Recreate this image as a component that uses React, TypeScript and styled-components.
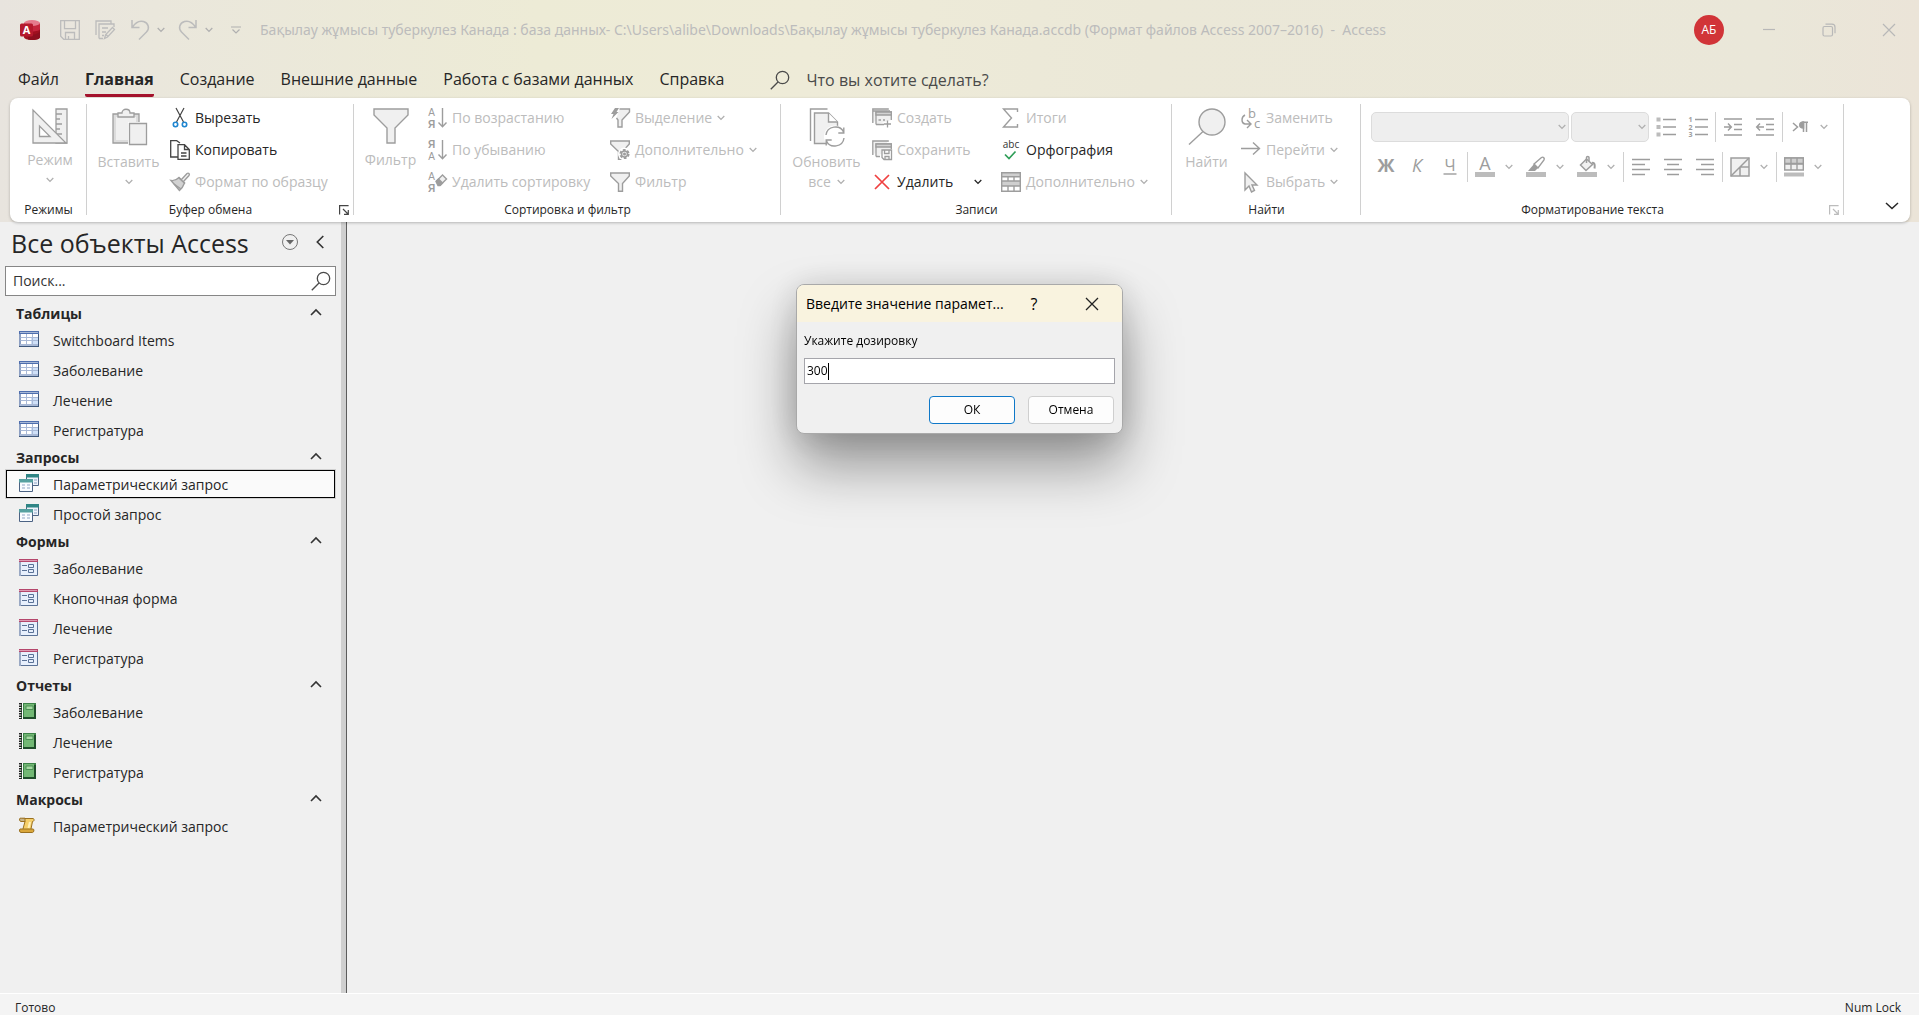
import React from 'react';
import styled, { createGlobalStyle } from 'styled-components';

const GlobalStyle = createGlobalStyle`
  * { box-sizing: border-box; }
  html, body, #root { height: 100%; }
  body {
    margin: 0;
    overflow: hidden;
    font-family: 'Open Sans', 'Noto Sans', sans-serif;
    font-size: 14px;
    line-height: 20px;
    color: #262626;
    background: #f0f0f0;
  }
  button, input, select { font: inherit; color: inherit; margin: 0; }
  button { border: 0; padding: 0; background: none; }
  svg { display: block; flex: none; overflow: visible; }
`;

const G = '#9d9d9d';
const F = '#f0f0f0';

/* ---------- layout ---------- */

const Page = styled.div`
  display: flex;
  flex-direction: column;
  height: 100%;
`;

const Chrome = styled.header`
  background: linear-gradient(90deg, #e8e4de 0%, #eae7dc 8%, #edebd6 28%, #eeebd8 42%, #ebe8d8 60%, #eae7d9 92%, #ebe4d8 100%);
`;

const TitleBar = styled.div`
  display: flex;
  align-items: center;
  height: 60px;
  padding-left: 20px;
  color: #bcbcbc;

  > svg { margin-right: 12px; }
`;

const QuickButton = styled.button`
  display: flex;
  justify-content: center;
  align-items: center;
  width: 35px;
  height: 32px;
`;

const QuickDrop = styled(QuickButton)`
  width: 8px;
  margin-right: 5px;
`;

const WindowTitle = styled.div`
  flex: 1;
  padding-left: 7px;
  font-family: 'Noto Sans', 'Open Sans', sans-serif;
  white-space: pre;
  overflow: hidden;
`;

const Avatar = styled.button`
  width: 30px;
  height: 30px;
  margin-right: 15px;
  border-radius: 50%;
  background: #d13438;
  color: #fff;
  font-size: 12px;
`;

const WindowButton = styled.button`
  display: flex;
  align-items: center;
  justify-content: center;
  width: 60px;
  height: 60px;
`;

const TabBar = styled.nav`
  display: flex;
  align-items: center;
  gap: 26px;
  height: 38px;
  padding: 2px 18px 0;
  font-size: 16px;
`;

const Tab = styled.button<{ $active?: boolean }>`
  height: 33px;
  border-bottom: 3px solid ${p => (p.$active ? '#a4122c' : 'transparent')};
  border-radius: 2px;
  font-weight: ${p => (p.$active ? 700 : 400)};
  white-space: nowrap;
`;

const TellMe = styled.label`
  display: flex;
  align-items: center;
  gap: 16px;
  flex: 1;
  padding-left: 20px;

  input {
    flex: 1;
    border: 0;
    padding: 0;
    background: none;
    outline: 0;
  }
  input::placeholder { color: #4a4a4a; opacity: 1; }
`;

const Ribbon = styled.div`
  position: relative;
  display: flex;
  height: 124px;
  margin: 0 9px 0 10px;
  background: #fff;
  border-radius: 8px;
  box-shadow: 0 1px 3px rgba(0, 0, 0, 0.25);
`;

const Group = styled.section<{ $w: number }>`
  display: flex;
  flex-direction: column;
  flex: none;
  width: ${p => p.$w}px;
  background: linear-gradient(#d0d0d0, #d0d0d0) right 6px / 1px 111px no-repeat;
`;

const GroupBody = styled.div`
  display: flex;
  height: 100px;
  padding-top: 4px;
`;

const GroupFooter = styled.div`
  display: flex;
  align-items: center;
  height: 24px;

  h2 {
    flex: 1;
    margin: 0;
    font-size: 12px;
    font-weight: 400;
    text-align: center;
    white-space: nowrap;
  }
  button {
    display: flex;
    justify-content: center;
    width: 20px;
  }
`;

const BigButton = styled.button<{ $w: number }>`
  display: flex;
  flex-direction: column;
  align-items: center;
  flex: none;
  width: ${p => p.$w}px;
  padding-top: 6px;
  color: #bcbcbc;

  > svg:first-child { margin-bottom: 6px; }
`;

const BigLine = styled.span`
  display: flex;
  align-items: center;
  gap: 6px;
  height: 20px;
`;

const Stack = styled.div<{ $w: number }>`
  display: flex;
  flex-direction: column;
  flex: none;
  width: ${p => p.$w}px;
`;

const SmallButton = styled.button<{ $off?: boolean; $wide?: boolean }>`
  display: flex;
  align-items: center;
  gap: 5px;
  height: 32px;
  white-space: nowrap;
  color: ${p => (p.$off ? '#bcbcbc' : '#262626')};

  > svg:last-child:not(:first-child) { margin-left: ${p => (p.$wide ? 16 : 0)}px; }
`;

const FormatArea = styled.div`
  display: flex;
  flex-direction: column;
  gap: 10px;
  padding: 10px 0 0 9px;
`;

const FormatRow = styled.div`
  display: flex;
  align-items: center;
  height: 30px;
`;

const Tool = styled.button`
  display: flex;
  align-items: center;
  justify-content: center;
  width: 32px;
  height: 30px;
`;

const Drop = styled.button`
  display: flex;
  align-items: center;
  justify-content: center;
  width: 16px;
  height: 30px;
  margin-right: 3px;
`;

const Rule = styled.span`
  width: 1px;
  height: 30px;
  margin: 0 1px;
  background: #d0d0d0;
`;

const Combo = styled.span<{ $w: number }>`
  display: grid;
  align-items: center;
  width: ${p => p.$w}px;
  margin: 0 1px;

  select {
    grid-area: 1 / 1;
    width: 100%;
    height: 30px;
    border: 1px solid #dcdcdc;
    border-radius: 5px;
    background: #eeeeee;
    appearance: none;
    opacity: 1;
  }
  svg { grid-area: 1 / 1; justify-self: end; margin-right: 3px; }
`;

const CollapseCell = styled.div`
  display: flex;
  flex: 1;
  justify-content: flex-end;
  align-items: flex-end;
  padding: 0 11px 9px;
`;

const Workspace = styled.div`
  display: flex;
  flex: 1;
  min-height: 0;
`;

const Sidebar = styled.aside`
  width: 347px;
  flex: none;
  padding: 0 5px;
  border-right: 1px solid #5c5c5c;
  background: linear-gradient(#cfcfcf, #cfcfcf) right / 5px 100% no-repeat, #f0f0f0;
`;

const SideHeader = styled.div`
  display: flex;
  align-items: center;
  height: 44px;
  padding: 0 6px 3px 6px;

  h1 {
    flex: 1;
    margin: 0;
    font-size: 25px;
    line-height: 36px;
    font-weight: 400;
    white-space: nowrap;
  }
`;

const HeaderButton = styled.button`
  display: flex;
  justify-content: center;
  width: 30px;
  padding-bottom: 2px;
`;

const SearchField = styled.label`
  display: flex;
  align-items: center;
  width: 331px;
  height: 30px;
  margin-bottom: 5px;
  padding: 0 4px 0 7px;
  border: 1px solid #868686;
  background: #fff;

  input {
    flex: 1;
    min-width: 0;
    border: 0;
    padding: 0;
    outline: 0;
    background: none;
  }
  input::placeholder { color: #333; opacity: 1; }
`;

const SectionButton = styled.button`
  display: flex;
  align-items: center;
  justify-content: space-between;
  width: 331px;
  height: 24px;
  padding: 1px 14px 0 11px;
  font-weight: 700;

  svg { margin-bottom: 2px; }
`;

const ObjectList = styled.ul`
  margin: 0;
  padding: 0;
  list-style: none;

  li { padding: 1px; }
`;

const ObjectButton = styled.button<{ $selected?: boolean }>`
  display: flex;
  align-items: center;
  gap: 14px;
  width: 329px;
  height: 28px;
  padding: 2px 0 0 12px;
  border: 1px solid ${p => (p.$selected ? '#000' : 'transparent')};
  background: ${p => (p.$selected ? '#fafafa' : 'none')};
  box-shadow: ${p => (p.$selected ? '0 0 0 1px #d0d0d0' : 'none')};
`;

const Canvas = styled.main`
  flex: 1;
`;

const StatusBar = styled.footer`
  display: flex;
  justify-content: space-between;
  align-items: center;
  height: 22px;
  padding: 6px 18px 0 15px;
  border-top: 1px solid #fff;
  background: #f4f4f4;
  font-size: 12px;
`;

const Overlay = styled.div`
  position: fixed;
  inset: 0;
  display: flex;
  justify-content: center;
  align-items: flex-start;
  padding-top: 284px;
`;

const Dialog = styled.form`
  width: 327px;
  border: 1px solid #a9a9a9;
  border-radius: 8px;
  background: #f0f0f0;
  color: #000;
  font-size: 12px;
  box-shadow: 0 32px 56px rgba(0, 0, 0, 0.38), 0 2px 32px rgba(0, 0, 0, 0.14);
`;

const DialogTitle = styled.div`
  display: flex;
  align-items: center;
  height: 37px;
  padding: 0 1px 0 9px;
  border-radius: 7px 7px 0 0;
  background: #f9f3df;
  font-size: 14px;

  h2 {
    flex: 1;
    margin: 0;
    font-size: 14px;
    font-weight: 400;
    white-space: nowrap;
  }
`;

const DialogButton = styled.button`
  display: flex;
  align-items: center;
  justify-content: center;
  width: 58px;
  height: 36px;
  font-size: 16px;
`;

const DialogBody = styled.div`
  display: flex;
  flex-direction: column;
  padding: 9px 7px;
`;

const ValueBox = styled.div`
  display: flex;
  align-items: center;
  height: 26px;
  margin: 7px 0 12px;
  padding: 0 2px;
  border: 1px solid #a5a5ab;
  background: #fff;

  input {
    field-sizing: content;
    border: 0;
    padding: 0;
    outline: 0;
    background: none;
    caret-color: transparent;
  }
  span { width: 1px; height: 17px; background: #000; }
`;

const DialogActions = styled.div`
  display: flex;
  justify-content: flex-end;
  gap: 13px;
  padding-right: 1px;
`;

const ActionButton = styled.button<{ $primary?: boolean }>`
  width: 86px;
  height: 28px;
  border: 1px solid ${p => (p.$primary ? '#0f78c8' : '#cfcfcf')};
  border-radius: 4px;
  background: #fdfdfd;
`;

/* ---------- icons ---------- */

type IconProps = { w?: number; h?: number; s?: string; children?: React.ReactNode; sw?: number };

const Icon = ({ w = 20, h = 20, s = G, sw = 1, children }: IconProps) => (
  <svg width={w} height={h} viewBox={`0 0 ${w} ${h}`} fill="none" stroke={s} strokeWidth={sw} aria-hidden="true">
    {children}
  </svg>
);

const Chevron = ({ color = '#b0b0b0' }: { color?: string }) => (
  <Icon w={8} h={6} s={color} sw={1.3}><path d="M.7 1 4 4.4 7.3 1" /></Icon>
);

const Glyph = styled.text<{ $c?: string }>`
  stroke: none;
  fill: ${p => p.$c ?? G};
  font-family: 'Open Sans', sans-serif;
`;

const SortGlyph = styled(Glyph)`
  font-family: 'Liberation Sans', sans-serif;
  font-size: 10px;
  text-anchor: middle;
`;

const AccessLogo = () => (
  <svg width="20" height="20" viewBox="0 0 20 20" aria-hidden="true">
    <path d="M4 3v14c0 1.8 3.6 3 8 3s8-1.200 8-3V3z" fill="#a0101f" />
    <path d="M4 9c1 1.500 4 2.500 8 2.500s8-1 8-2.500V3H4z" fill="#c4253c" />
    <path d="M8 19.500c4 1 12 .6 12-2.500v-6c-2 3-6 4-12 4z" fill="#8c0f1e" />
    <ellipse cx="12" cy="3" rx="8" ry="3" fill="#e57a8c" />
    <rect x="0" y="3.500" width="13" height="13" rx="1.500" fill="#b5192d" />
    <Glyph x="6.500" y="14" fontSize="11" fontWeight="700" textAnchor="middle" $c="#fff">A</Glyph>
  </svg>
);

const SaveIcon = () => (
  <Icon s="#bcbcbc" sw={1.3}>
    <path d="M.7.7h18.600v18.600H3.700L.7 16.300zM4.500.7v8h11v-8M5.500 19v-6.500h9V19M8.500 19v-3" />
  </Icon>
);
const DesignIcon = () => (
  <Icon s="#bcbcbc" sw={1.3}>
    <path d="M1 15V1h15v3M4 18.500V4h15v3M4 18.500h4M7 8h6M7 12h4M7 15.500h2" />
    <path d="m9.500 18.500 1.200-4L17.500 7.500l2 2-7 7.500zM11 14.500l2 2" />
  </Icon>
);
const UndoIcon = ({ flip }: { flip?: boolean }) => (
  <Icon w={18} h={20} s="#bcbcbc" sw={1.5}>
    <path transform={flip ? 'translate(18 0) scale(-1 1)' : undefined} d="M1 0v7.500h7.500M1.500 7C4.500 2.500 8.500.3 12.500 1.500c5 1.500 6.500 7 3 10.500L8 19.500" />
  </Icon>
);
const SearchIcon = ({ s = '#4a4a4a' }: { s?: string }) => (
  <Icon s={s} sw={1.3}><circle cx="12.500" cy="7.500" r="6.200" /><path d="M8 12 .8 19.200" /></Icon>
);

const DesignModeIcon = () => (
  <Icon w={36} h={36} sw={1.3}>
    <path d="M24 1h11v34H24z" fill={F} />
    <path d="M24 6h6M24 11h4M24 16h6M24 21h4M24 26h6" />
    <path d="M1 2v33h33z" fill={F} />
    <path d="M7.500 18v10.500h10.500z" fill="#fff" />
  </Icon>
);
const PasteIcon = () => (
  <Icon w={36} h={38} sw={1.3}>
    <path d="M2 6h26v29H2z" fill="#dcdcdc" /><path d="M5 9h20v23H5z" fill={F} stroke="none" />
    <path d="M7 9V5h4c0-5 8-5 8 0h4v4z" fill={F} />
    <path d="M18.500 15.500h17v21h-17z" fill={F} stroke="#fff" strokeWidth="3" /><path d="M18.500 15.500h17v21h-17z" fill={F} />
  </Icon>
);
const CutIcon = () => (
  <Icon s="#444" sw={1.2}>
    <path d="M6 0l7.500 14M14 0 6.500 14" />
    <g stroke="#1f86d0" strokeWidth="1.600"><circle cx="5.500" cy="16.500" r="2.200" /><circle cx="14.500" cy="16.500" r="2.200" /></g>
  </Icon>
);
const CopyIcon = () => (
  <Icon s="#444" sw={1.3}>
    <path d="M8 17H.7V.7h6L10 3" />
    <path d="M8 4.700h6.500l4.800 4.800v9.800H8zM14.500 5v4.500h4.500M11 13h5.500M11 16h5.500" fill="#fff" />
  </Icon>
);
const BrushIcon = () => (
  <Icon sw={1.4}>
    <path d="M1 8.500c3 .5 5.500-.5 8-3l5.500 5.500c-1.500 4-3 6-5 7.500z" fill="#d2d2d2" />
    <path d="m4 12 7 5M8.500 5.500l6.500 6M11.500 7.500 17 1.500c1.500-1 3 .5 2 2l-5.500 6" fill={F} />
  </Icon>
);
const FunnelBig = () => (
  <Icon w={36} h={36} sw={1.4}><path d="M1 1h34v6L22 20v15h-8V20L1 7z" fill={F} /></Icon>
);
const FunnelIcon = ({ kind }: { kind?: 'bolt' | 'gear' }) => (
  <Icon sw={1.4}>
    {kind === 'bolt' ? (
      <>
        <path d="M9.500 1h10v3L12 12v7H8v-7L6.500 10" fill={F} />
        <path d="M5 0h4L6.500 4h2L1.500 11 3.500 6H1z" fill={G} stroke="none" />
      </>
    ) : (
      <path d="M.7 1h18.600v3L12.500 11.500V19.300h-4V11.500L.7 4z" fill={F} />
    )}
    {kind === 'gear' && (
      <>
        <circle cx="14.500" cy="14" r="6.500" fill="#fff" stroke="none" />
        <circle cx="14.500" cy="14" r="3.800" strokeWidth="2.600" strokeDasharray="2.400 1.600" fill={F} />
        <circle cx="14.500" cy="14" r="3" fill={F} /><circle cx="14.500" cy="14" r=".8" />
      </>
    )}
  </Icon>
);
const SortIcon = ({ top, bottom, clear }: { top: string; bottom: string; clear?: boolean }) => (
  <Icon sw={1.4}>
    <SortGlyph x="4.500" y="8" fontWeight={top === 'А' ? 400 : 700}>{top}</SortGlyph>
    <SortGlyph x="4.500" y="20" fontWeight={bottom === 'А' ? 400 : 700}>{bottom}</SortGlyph>
    {clear ? (
      <><path d="m9.500 9 6-6 4 4-6 6z" fill={F} /><path d="m9 9.500 2.500-2.500 4 4L13 13.500h-2z" fill={G} /></>
    ) : (
      <path d="M15.500 0v18.500M11.500 14.500l4 4.300 4-4.300" />
    )}
  </Icon>
);
const RefreshIcon = () => (
  <Icon w={36} h={38} sw={1.4}>
    <path d="M1.500 33V1h17" /><path d="M5.500 35.500V5h14l9 9v21.500z" fill={F} /><path d="M19.500 5v9h9" fill="#fff" />
    <circle cx="26" cy="28.500" r="11" fill="#fff" stroke="none" />
    <path d="M17 27c1-9 14-11 17.500-3M34.800 19.500V25h-5.500M35 30c-1 9-14 11-17.500 3M17.200 37.500V32h5.500" />
  </Icon>
);
const NewRecordIcon = () => (
  <Icon sw={1.3}>
    <path d="M.8 15V1h16M4 16.500V4h15.300v8" fill={F} /><path d="M4 4h15.300v3H4z" fill="#d2d2d2" />
    <path d="M1 3h17M6.500 12H9M11 12h2M4 16.500h8M15.500 12.500v7M12 16h7" />
  </Icon>
);
const SaveRecordIcon = () => (
  <Icon sw={1.3}>
    <path d="M.8 15V1h16M4 16.500V4h15.300v5M4 16.500h4" fill={F} /><path d="M4 4h15.300v3H4z" fill="#d2d2d2" />
    <path d="M10 10h9.500v9.500H12L10 17.500zM12.500 10v3.500H17V10M13 19v-2.500h4V19" fill="#fff" />
  </Icon>
);
const DeleteIcon = () => <Icon s="#f04040" sw={1.7}><path d="m3 3 14 14M17 3 3 17" /></Icon>;
const SigmaIcon = () => <Icon sw={1.4}><path d="M16.500 4V1H2.500l8 9-8 9h14v-3" /></Icon>;
const SpellIcon = () => (
  <Icon>
    <Glyph x="10" y="8" fontSize="10" textAnchor="middle" $c="#333">abc</Glyph>
    <path d="m4 14.500 4 4 6.500-7" stroke="#2f9e58" strokeWidth="1.700" />
  </Icon>
);
const MoreRecordsIcon = () => (
  <Icon sw={1.4}>
    <path d="M.7.7h18.600v18.600H.7z" fill="#fff" /><path d="M.7.7h18.600v4H.7zM.7 9h18.600v5H.7z" fill="#cfcfcf" />
    <path d="M7 4.700V9M13 4.700V9M7 14v5M13 14v5" />
  </Icon>
);
const FindBig = () => (
  <Icon w={38} h={38} sw={1.4}><circle cx="24" cy="14" r="13" fill={F} /><path d="M15 23.500 1 36.500" /></Icon>
);
const ReplaceIcon = () => (
  <Icon sw={1.4}>
    <Glyph x="11" y="10" fontSize="13" textAnchor="middle">b</Glyph>
    <Glyph x="16" y="20" fontSize="13" textAnchor="middle">c</Glyph>
    <path d="M4 7c-4 2-4 8 0 9h5M6 12l4 4-4 4" />
  </Icon>
);
const GoIcon = () => <Icon sw={1.4}><path d="M0 8.500h18M12 2.500l6.500 6-6.500 6" /></Icon>;
const PointerIcon = () => <Icon sw={1.4}><path d="M4 1v17l4-4 2.500 6 3-1.500-2.500-5.500H16z" fill={F} /></Icon>;
const LauncherIcon = ({ s = '#444' }: { s?: string }) => (
  <Icon w={10} h={10} s={s} sw={1.2}><path d="M.6 9.500V.6h9M4 4l5 5M9.300 5v4.300H5" /></Icon>
);
const Bars = ({ rows }: { rows: [number, number][] }) => (
  <Icon sw={1.5}>{rows.map(([a, b], i) => <path key={i} d={`M${a} ${2.5 + i * 5}H${b}`} />)}</Icon>
);
const BulletsIcon = () => (
  <Icon sw={1.6}>
    <path d="M7 2.500h13M7 10h13M7 17.500h13" />
    <path d="M.5.500h4v4h-4zM.5 8h4v4h-4zM.5 15.500h4v4h-4z" fill="#bcbcbc" stroke="none" />
  </Icon>
);
const NumbersIcon = () => (
  <Icon sw={1.6}>
    <path d="M7 2.500h13M7 10h13M7 17.500h13" />
    {['1', '2', '3'].map((n, i) => <Glyph key={n} x="2.500" y={5 + i * 7.5} fontSize="7" fontWeight="700" textAnchor="middle">{n}</Glyph>)}
  </Icon>
);
const IndentIcon = ({ out }: { out?: boolean }) => (
  <Icon sw={1.5}>
    <path d="M1 2h18M11 7.500h8M11 12.500h8M1 18h18" />
    <path d={out ? 'M9 10H2M5 6.500 1.700 10 5 13.500' : 'M1 10h7M5 6.500 8.300 10 5 13.500'} />
  </Icon>
);
const PilcrowIcon = () => (
  <Icon sw={1.5}>
    <path d="m3 6 4.500 4L3 14" /><path d="M13.500 15V5.500M16.500 15V5.500M18 5.200h-6" />
    <path d="M13.500 5c-5 0-5 6 0 6z" fill={G} />
  </Icon>
);
const Letter = ({ kind }: { kind: 'b' | 'i' | 'u' | 'color' }) => (
  <Icon h={24}>
    {kind === 'b' && <Glyph x="10" y="17" fontSize="18" fontWeight="700" textAnchor="middle">Ж</Glyph>}
    {kind === 'i' && <Glyph x="9" y="17" fontSize="18" fontStyle="italic" textAnchor="middle">К</Glyph>}
    {kind === 'u' && <><Glyph x="10" y="16" fontSize="16" textAnchor="middle">Ч</Glyph><path d="M3.500 19h13" strokeWidth="1.400" /></>}
    {kind === 'color' && <><Glyph x="10" y="15" fontSize="18" textAnchor="middle">А</Glyph><path d="M0 19.500h20" stroke="#bcbcbc" strokeWidth="5" /></>}
  </Icon>
);
const MarkerIcon = () => (
  <Icon h={24} sw={1.4}>
    <path d="M0 19.500h20" stroke="#bcbcbc" strokeWidth="5" />
    <path d="m8 9 7.500-6.500c1.500-1 3.500.5 2.500 2.500L12 13z" /><path d="M2 16 8 9l4 4-3 3z" fill={G} stroke="none" />
  </Icon>
);
const BucketIcon = () => (
  <Icon h={24} sw={1.5}>
    <path d="M0 19.500h20" stroke="#bcbcbc" strokeWidth="5" />
    <path d="M9.500 4 15.500 9.500 9 15.500 3.500 10z" fill={F} /><path d="M9.500 8V2.500C9.500 1 12 1 12 2.500V6" />
    <path d="M15 8c3-1 3 3 2.500 5.500" strokeWidth="2" />
  </Icon>
);
const GridlinesIcon = () => (
  <Icon sw={1.5}><path d="M1 1h18v18H1z" fill={F} /><path d="M1 19 19 1M10 10h9M10 10v9" /></Icon>
);
const RowColorIcon = () => (
  <Icon h={22} sw={1.4}>
    <path d="M.7 2h18.600v12H.7z" fill={F} /><path d="M.7 2h18.600v5.500H.7z" fill="#cfcfcf" />
    <path d="M7 2v12M13 2v12M.7 8h18.600" /><path d="M0 18.500h20" stroke="#bcbcbc" strokeWidth="4" />
  </Icon>
);

const TableIcon = () => (
  <Icon w={20} h={16} s="#a9b9d6">
    <path d="M0 0h20v16H0z" fill="#3f587c" stroke="none" /><path d="M0 0h20v3H0z" fill="#4f6fae" stroke="none" />
    <path d="M0 3h2v12H0z" fill="#8c9fc2" stroke="none" />
    <path d="M2 3h17v10H2z" fill="#fff" stroke="none" /><path d="M12 7h7v6h-7z" fill="#cfe0f8" stroke="none" />
    <path d="M1 1.500h18" /><path d="M1.500 6.500H19M1.500 9.500H19M7.500 3v10M13.500 3v10" /><path d="M1 14h18" strokeWidth="2" />
  </Icon>
);
const QueryIcon = () => (
  <Icon w={20} h={18} s="#4c6384">
    <path d="M7.500.5h12v11h-12z" fill="#eef3fb" /><path d="M7 0h13v3.500H7z" fill="#2f8585" stroke="none" />
    <path d="M10 6h3M15 6h3M15 9h3" stroke="#8fa5c5" />
    <path d="M.5 5.500h13v12H.5z" fill="#f8fbff" /><path d="M0 5h14v3.500H0z" fill="#55a0a0" stroke="none" />
    <path d="M3 11h3M8 11h3M3 14h3M8 14h3" stroke="#8fa5c5" />
  </Icon>
);
const FormIcon = () => (
  <Icon w={19} h={17} s="#5a7196">
    <path d="M.5.5h18v16H.5z" fill="#e7effc" /><path d="M0 0h19v3H0z" fill="#b5476c" stroke="none" /><path d="M0 1.500h18" stroke="#dc9ab4" />
    <path d="M0 3h2v14H0z" fill="#9aa9c4" stroke="none" />
    <path d="M3 6.500h5M3 11.500h5M9.500 5.500h5v3h-5zM9.500 10.500h5v3h-5z" />
  </Icon>
);
const ReportIcon = () => (
  <Icon w={17} h={16} s="none">
    <path d="M2 0h15v16H2z" fill="#3c8248" /><path d="M5 1h10v13H5z" fill="#72b874" /><path d="M15 2h2v14H4v-2h11z" fill="#1f4d2b" />
    <path d="M7 3h7v3.500H7z" fill="#a6d9a3" stroke="#4b8f53" /><path d="M1.500 0v16" stroke="#222" strokeWidth="3" strokeDasharray="1.500 1" />
    <path d="M3.500 0v16" stroke="#fff" />
  </Icon>
);
const MacroIcon = () => (
  <Icon w={16} h={16} s="#9a7020">
    <path d="M3.500 1.500H14c1.500 0 1.500 3-.5 3L12 12c0 2-1 3.500-2.500 3.500H3l3-11z" fill="#f5cf6a" />
    <path d="M1 1.200h5v3.300H2C.6 4.500 0 2 1 1.200z" fill="#c8b48a" />
    <path d="M1 12h13c1.500 0 1 3.500-.5 3.500H2C.5 15.500 0 13 1 12z" fill="#d9a63a" />
    <path d="M11 5 9.500 11" stroke="#fff0b8" strokeWidth="2" />
  </Icon>
);

/* ---------- data ---------- */

const sections = [
  { title: 'Таблицы', icon: <TableIcon />, items: ['Switchboard Items', 'Заболевание', 'Лечение', 'Регистратура'] },
  { title: 'Запросы', icon: <QueryIcon />, items: ['Параметрический запрос', 'Простой запрос'], selected: 0 },
  { title: 'Формы', icon: <FormIcon />, items: ['Заболевание', 'Кнопочная форма', 'Лечение', 'Регистратура'] },
  { title: 'Отчеты', icon: <ReportIcon />, items: ['Заболевание', 'Лечение', 'Регистратура'] },
  { title: 'Макросы', icon: <MacroIcon />, items: ['Параметрический запрос'] },
];

const IconSlot = styled.span`
  display: flex;
  width: 20px;
  padding-bottom: 4px;
`;

const Footer = ({ title, launcher }: { title: string; launcher?: string }) => (
  <GroupFooter>
    <h2>{title}</h2>
    {launcher && <button aria-label={`${title}: параметры`}><LauncherIcon s={launcher} /></button>}
  </GroupFooter>
);

const Small = ({ icon, text, on, drop, wide }: { icon: React.ReactNode; text: string; on?: boolean; drop?: boolean; wide?: boolean }) => (
  <SmallButton $off={!on} $wide={wide}>
    {icon}
    <span>{text}</span>
    {drop && <Chevron color={on ? '#262626' : undefined} />}
  </SmallButton>
);

export default function App() {
  return (
    <Page>
      <GlobalStyle />
      <Chrome>
        <TitleBar>
          <AccessLogo />
          <QuickButton aria-label="Сохранить"><SaveIcon /></QuickButton>
          <QuickButton aria-label="Сохранить как"><DesignIcon /></QuickButton>
          <QuickButton aria-label="Отменить"><UndoIcon /></QuickButton>
          <QuickDrop aria-label="История отмены"><Chevron /></QuickDrop>
          <QuickButton aria-label="Вернуть"><UndoIcon flip /></QuickButton>
          <QuickDrop aria-label="История возврата"><Chevron /></QuickDrop>
          <QuickButton aria-label="Настройка панели">
            <Icon w={10} h={8} s="#b0b0b0" sw={1.2}><path d="M0 1h10M1.500 3.500 5 7l3.500-3.500" /></Icon>
          </QuickButton>
          <WindowTitle>{'Бақылау жұмысы туберкулез Канада : база данных- C:\\Users\\alibe\\Downloads\\Бақылау жұмысы туберкулез Канада.accdb (Формат файлов Access 2007–2016)  -  Access'}</WindowTitle>
          <Avatar>АБ</Avatar>
          <WindowButton aria-label="Свернуть"><Icon w={14} h={14} s="#b8b8b8" sw={1.2}><path d="M1 6.500h12" /></Icon></WindowButton>
          <WindowButton aria-label="Восстановить">
            <Icon w={14} h={14} s="#b8b8b8" sw={1.2}><rect x="1" y="3.500" width="9.500" height="9.500" rx="1.500" /><path d="M3.500 1.200h6.500c2 0 3 1 3 3v6" /></Icon>
          </WindowButton>
          <WindowButton aria-label="Закрыть"><Icon w={14} h={14} s="#b8b8b8" sw={1.2}><path d="m1 1 12 12M13 1 1 13" /></Icon></WindowButton>
        </TitleBar>

        <TabBar>
          <Tab>Файл</Tab>
          <Tab $active>Главная</Tab>
          <Tab>Создание</Tab>
          <Tab>Внешние данные</Tab>
          <Tab>Работа с базами данных</Tab>
          <Tab>Справка</Tab>
          <TellMe>
            <SearchIcon />
            <input aria-label="Помощник" placeholder="Что вы хотите сделать?" />
          </TellMe>
        </TabBar>

        <Ribbon>
          <Group $w={77}>
            <GroupBody>
              <BigButton $w={80}>
                <DesignModeIcon />
                <BigLine>Режим</BigLine>
                <BigLine><Chevron /></BigLine>
              </BigButton>
            </GroupBody>
            <Footer title="Режимы" />
          </Group>

          <Group $w={267}>
            <GroupBody>
              <BigButton $w={83}>
                <PasteIcon />
                <BigLine>Вставить</BigLine>
                <BigLine><Chevron /></BigLine>
              </BigButton>
              <Stack $w={170}>
                <Small icon={<CutIcon />} text="Вырезать" on />
                <Small icon={<CopyIcon />} text="Копировать" on />
                <Small icon={<BrushIcon />} text="Формат по образцу" />
              </Stack>
            </GroupBody>
            <Footer title="Буфер обмена" launcher="#444" />
          </Group>

          <Group $w={427}>
            <GroupBody>
              <BigButton $w={73}>
                <FunnelBig />
                <BigLine>Фильтр</BigLine>
              </BigButton>
              <Stack $w={183}>
                <Small icon={<SortIcon top="А" bottom="Я" />} text="По возрастанию" />
                <Small icon={<SortIcon top="Я" bottom="А" />} text="По убыванию" />
                <Small icon={<SortIcon top="А" bottom="Я" clear />} text="Удалить сортировку" />
              </Stack>
              <Stack $w={160}>
                <Small icon={<FunnelIcon kind="bolt" />} text="Выделение" drop />
                <Small icon={<FunnelIcon kind="gear" />} text="Дополнительно" drop />
                <Small icon={<FunnelIcon />} text="Фильтр" />
              </Stack>
            </GroupBody>
            <Footer title="Сортировка и фильтр" />
          </Group>

          <Group $w={391}>
            <GroupBody>
              <BigButton $w={91}>
                <RefreshIcon />
                <BigLine>Обновить</BigLine>
                <BigLine>все <Chevron /></BigLine>
              </BigButton>
              <Stack $w={129}>
                <Small icon={<NewRecordIcon />} text="Создать" />
                <Small icon={<SaveRecordIcon />} text="Сохранить" />
                <Small icon={<DeleteIcon />} text="Удалить" on drop wide />
              </Stack>
              <Stack $w={160}>
                <Small icon={<SigmaIcon />} text="Итоги" />
                <Small icon={<SpellIcon />} text="Орфография" on />
                <Small icon={<MoreRecordsIcon />} text="Дополнительно" drop />
              </Stack>
            </GroupBody>
            <Footer title="Записи" />
          </Group>

          <Group $w={189}>
            <GroupBody>
              <BigButton $w={69}>
                <FindBig />
                <BigLine>Найти</BigLine>
              </BigButton>
              <Stack $w={110}>
                <Small icon={<ReplaceIcon />} text="Заменить" />
                <Small icon={<GoIcon />} text="Перейти" drop />
                <Small icon={<PointerIcon />} text="Выбрать" drop />
              </Stack>
            </GroupBody>
            <Footer title="Найти" />
          </Group>

          <Group $w={483}>
            <GroupBody>
              <FormatArea>
                <FormatRow>
                  <Combo $w={198}><select aria-label="Шрифт" disabled /><Chevron /></Combo>
                  <Combo $w={78}><select aria-label="Размер шрифта" disabled /><Chevron /></Combo>
                  <Tool aria-label="Маркеры"><BulletsIcon /></Tool>
                  <Tool aria-label="Нумерация"><NumbersIcon /></Tool>
                  <Rule />
                  <Tool aria-label="Увеличить отступ"><IndentIcon /></Tool>
                  <Tool aria-label="Уменьшить отступ"><IndentIcon out /></Tool>
                  <Rule />
                  <Tool aria-label="Направление текста"><PilcrowIcon /></Tool>
                  <Drop aria-label="Варианты направления"><Chevron /></Drop>
                </FormatRow>
                <FormatRow>
                  <Tool aria-label="Полужирный"><Letter kind="b" /></Tool>
                  <Tool aria-label="Курсив"><Letter kind="i" /></Tool>
                  <Tool aria-label="Подчёркнутый"><Letter kind="u" /></Tool>
                  <Rule />
                  <Tool aria-label="Цвет текста"><Letter kind="color" /></Tool>
                  <Drop aria-label="Выбор цвета текста"><Chevron /></Drop>
                  <Tool aria-label="Выделение цветом"><MarkerIcon /></Tool>
                  <Drop aria-label="Выбор цвета выделения"><Chevron /></Drop>
                  <Tool aria-label="Заливка"><BucketIcon /></Tool>
                  <Drop aria-label="Выбор заливки"><Chevron /></Drop>
                  <Rule />
                  <Tool aria-label="По левому краю"><Bars rows={[[1, 19], [1, 14], [1, 19], [1, 14]]} /></Tool>
                  <Tool aria-label="По центру"><Bars rows={[[1, 19], [4, 16], [1, 19], [4, 16]]} /></Tool>
                  <Tool aria-label="По правому краю"><Bars rows={[[1, 19], [6, 19], [1, 19], [6, 19]]} /></Tool>
                  <Rule />
                  <Tool aria-label="Сетка"><GridlinesIcon /></Tool>
                  <Drop aria-label="Варианты сетки"><Chevron /></Drop>
                  <Rule />
                  <Tool aria-label="Цвет строк"><RowColorIcon /></Tool>
                  <Drop aria-label="Выбор цвета строк"><Chevron /></Drop>
                </FormatRow>
              </FormatArea>
            </GroupBody>
            <Footer title="Форматирование текста" launcher="#bcbcbc" />
          </Group>

          <CollapseCell>
            <button aria-label="Свернуть ленту">
              <Icon w={14} h={14} s="#262626" sw={1.5}><path d="m1 4 6 5.500L13 4" /></Icon>
            </button>
          </CollapseCell>
        </Ribbon>
      </Chrome>

      <Workspace>
        <Sidebar>
          <SideHeader>
            <h1>Все объекты Access</h1>
            <HeaderButton aria-label="Выбор категории">
              <Icon w={16} h={16} s="#777"><circle cx="8" cy="8" r="7.500" /><path d="M4 6h8l-4 4.500z" fill="#666" stroke="none" /></Icon>
            </HeaderButton>
            <HeaderButton aria-label="Свернуть область">
              <Icon w={8} h={14} s="#333" sw={1.6}><path d="M7.300 1 1.300 7l6 6" /></Icon>
            </HeaderButton>
          </SideHeader>
          <SearchField>
            <input aria-label="Поиск" placeholder="Поиск..." />
            <SearchIcon />
          </SearchField>
          {sections.map(section => (
            <section key={section.title}>
              <SectionButton>
                <span>{section.title}</span>
                <Icon w={12} h={10} s="#333" sw={1.6}><path d="m1 7 5-5 5 5" /></Icon>
              </SectionButton>
              <ObjectList>
                {section.items.map((item, i) => (
                  <li key={item}>
                    <ObjectButton $selected={section.selected === i}>
                      <IconSlot>{section.icon}</IconSlot>
                      <span>{item}</span>
                    </ObjectButton>
                  </li>
                ))}
              </ObjectList>
            </section>
          ))}
        </Sidebar>
        <Canvas />
      </Workspace>

      <StatusBar>
        <span>Готово</span>
        <span>Num Lock</span>
      </StatusBar>

      <Overlay>
        <Dialog role="dialog" aria-label="Введите значение параметра" onSubmit={e => e.preventDefault()}>
          <DialogTitle>
            <h2>Введите значение парамет...</h2>
            <DialogButton type="button">?</DialogButton>
            <DialogButton type="button" aria-label="Закрыть">
              <Icon w={14} h={14} s="#222" sw={1.3}><path d="m1 1 12 12M13 1 1 13" /></Icon>
            </DialogButton>
          </DialogTitle>
          <DialogBody>
            <label htmlFor="dose">Укажите дозировку</label>
            <ValueBox>
              <input id="dose" defaultValue="300" />
              <span />
            </ValueBox>
            <DialogActions>
              <ActionButton $primary type="submit">ОК</ActionButton>
              <ActionButton type="button">Отмена</ActionButton>
            </DialogActions>
          </DialogBody>
        </Dialog>
      </Overlay>
    </Page>
  );
}
